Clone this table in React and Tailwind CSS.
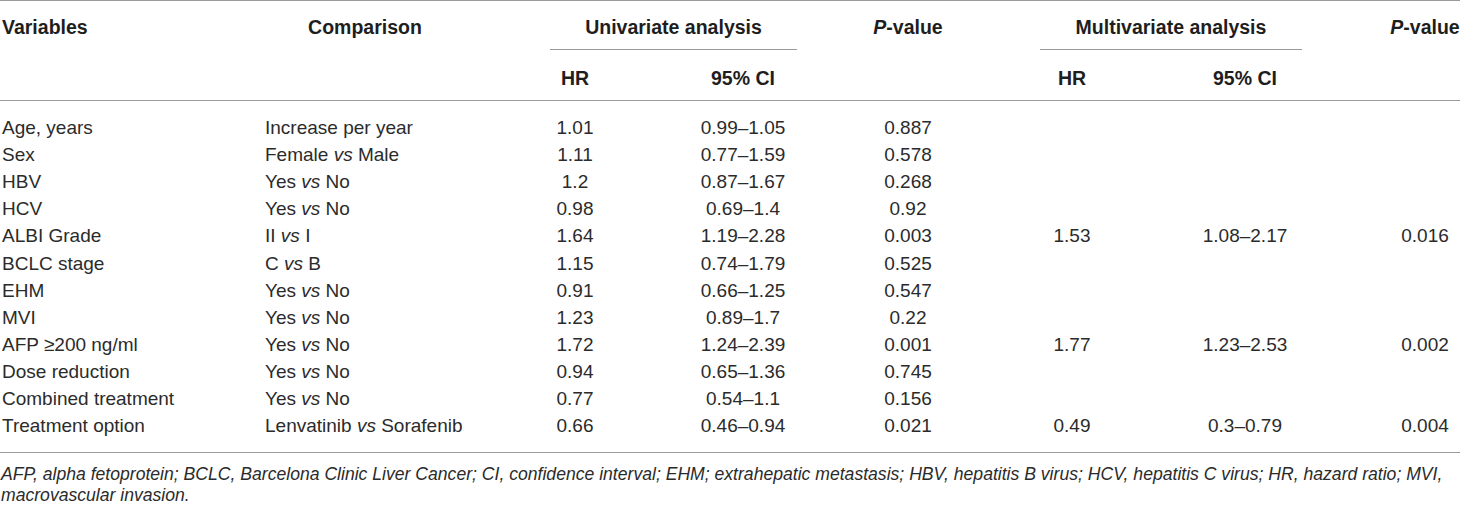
const rows = [
  ["Age, years", ["Increase per year"], "1.01", "0.99–1.05", "0.887", "", "", ""],
  ["Sex", ["Female", "Male"], "1.11", "0.77–1.59", "0.578", "", "", ""],
  ["HBV", ["Yes", "No"], "1.2", "0.87–1.67", "0.268", "", "", ""],
  ["HCV", ["Yes", "No"], "0.98", "0.69–1.4", "0.92", "", "", ""],
  ["ALBI Grade", ["II", "I"], "1.64", "1.19–2.28", "0.003", "1.53", "1.08–2.17", "0.016"],
  ["BCLC stage", ["C", "B"], "1.15", "0.74–1.79", "0.525", "", "", ""],
  ["EHM", ["Yes", "No"], "0.91", "0.66–1.25", "0.547", "", "", ""],
  ["MVI", ["Yes", "No"], "1.23", "0.89–1.7", "0.22", "", "", ""],
  ["AFP ≥200 ng/ml", ["Yes", "No"], "1.72", "1.24–2.39", "0.001", "1.77", "1.23–2.53", "0.002"],
  ["Dose reduction", ["Yes", "No"], "0.94", "0.65–1.36", "0.745", "", "", ""],
  ["Combined treatment", ["Yes", "No"], "0.77", "0.54–1.1", "0.156", "", "", ""],
  ["Treatment option", ["Lenvatinib", "Sorafenib"], "0.66", "0.46–0.94", "0.021", "0.49", "0.3–0.79", "0.004"],
];

const cols = "grid grid-cols-[265px_200px_220px_116px_214px_114px_232px_128px]";

function Comparison({ parts }) {
  if (parts.length === 1) return <span>{parts[0]}</span>;
  return (
    <span>
      {parts[0]} <i>vs</i> {parts[1]}
    </span>
  );
}

export default function App() {
  return (
    <div className="w-[1460px] h-[505px] overflow-hidden bg-white text-[#2b2b2b] text-[19px] leading-none" style={{ fontFamily: '"Liberation Sans", Arial, sans-serif' }}>
      <div className="w-[1489px] border-t border-[#9a9a9a]">
        {/* header row 1 */}
        <div className="grid grid-cols-[265px_200px_85px_247px_4px_214px_25px_262px_59px_128px] h-[49px] font-bold text-[19.5px] text-[#1e1e1e]">
          <div className="pl-[2px] pt-[17px]">Variables</div>
          <div className="text-center pt-[17px]">Comparison</div>
          <div />
          <div className="text-center pt-[17px] border-b border-[#9a9a9a]">Univariate analysis</div>
          <div />
          <div className="text-center pt-[17px]"><i>P</i>-value</div>
          <div />
          <div className="text-center pt-[17px] border-b border-[#9a9a9a]">Multivariate analysis</div>
          <div />
          <div className="text-center pt-[17px]"><i>P</i>-value</div>
        </div>
        {/* header row 2 */}
        <div className={`${cols} h-[51px] font-bold text-[19.5px] text-[#1e1e1e] border-b border-[#9a9a9a]`}>
          <div />
          <div />
          <div className="text-center pt-[19px]">HR</div>
          <div className="text-center pt-[19px]">95% CI</div>
          <div />
          <div className="text-center pt-[19px]">HR</div>
          <div className="text-center pt-[19px]">95% CI</div>
          <div />
        </div>
        {/* body */}
        <div className="pt-[13px] pb-[13px] border-b border-[#9a9a9a]">
          {rows.map((r) => (
            <div key={r[0]} className={`${cols} h-[27.1px] items-center`}>
              <div className="pl-[2px]">{r[0]}</div>
              <div><Comparison parts={r[1]} /></div>
              <div className="text-center">{r[2]}</div>
              <div className="text-center">{r[3]}</div>
              <div className="text-center">{r[4]}</div>
              <div className="text-center">{r[5]}</div>
              <div className="text-center">{r[6]}</div>
              <div className="text-center">{r[7]}</div>
            </div>
          ))}
        </div>
      </div>
      <p className="italic pt-[11px] pl-[1px] leading-[21px] text-[17.6px] w-[1460px]">
        <span className="whitespace-nowrap">AFP, alpha fetoprotein; BCLC, Barcelona Clinic Liver Cancer; CI, confidence interval; EHM; extrahepatic metastasis; HBV, hepatitis B virus; HCV, hepatitis C virus; HR, hazard ratio; MVI,</span>
        <br />
        macrovascular invasion.
      </p>
    </div>
  );
}
